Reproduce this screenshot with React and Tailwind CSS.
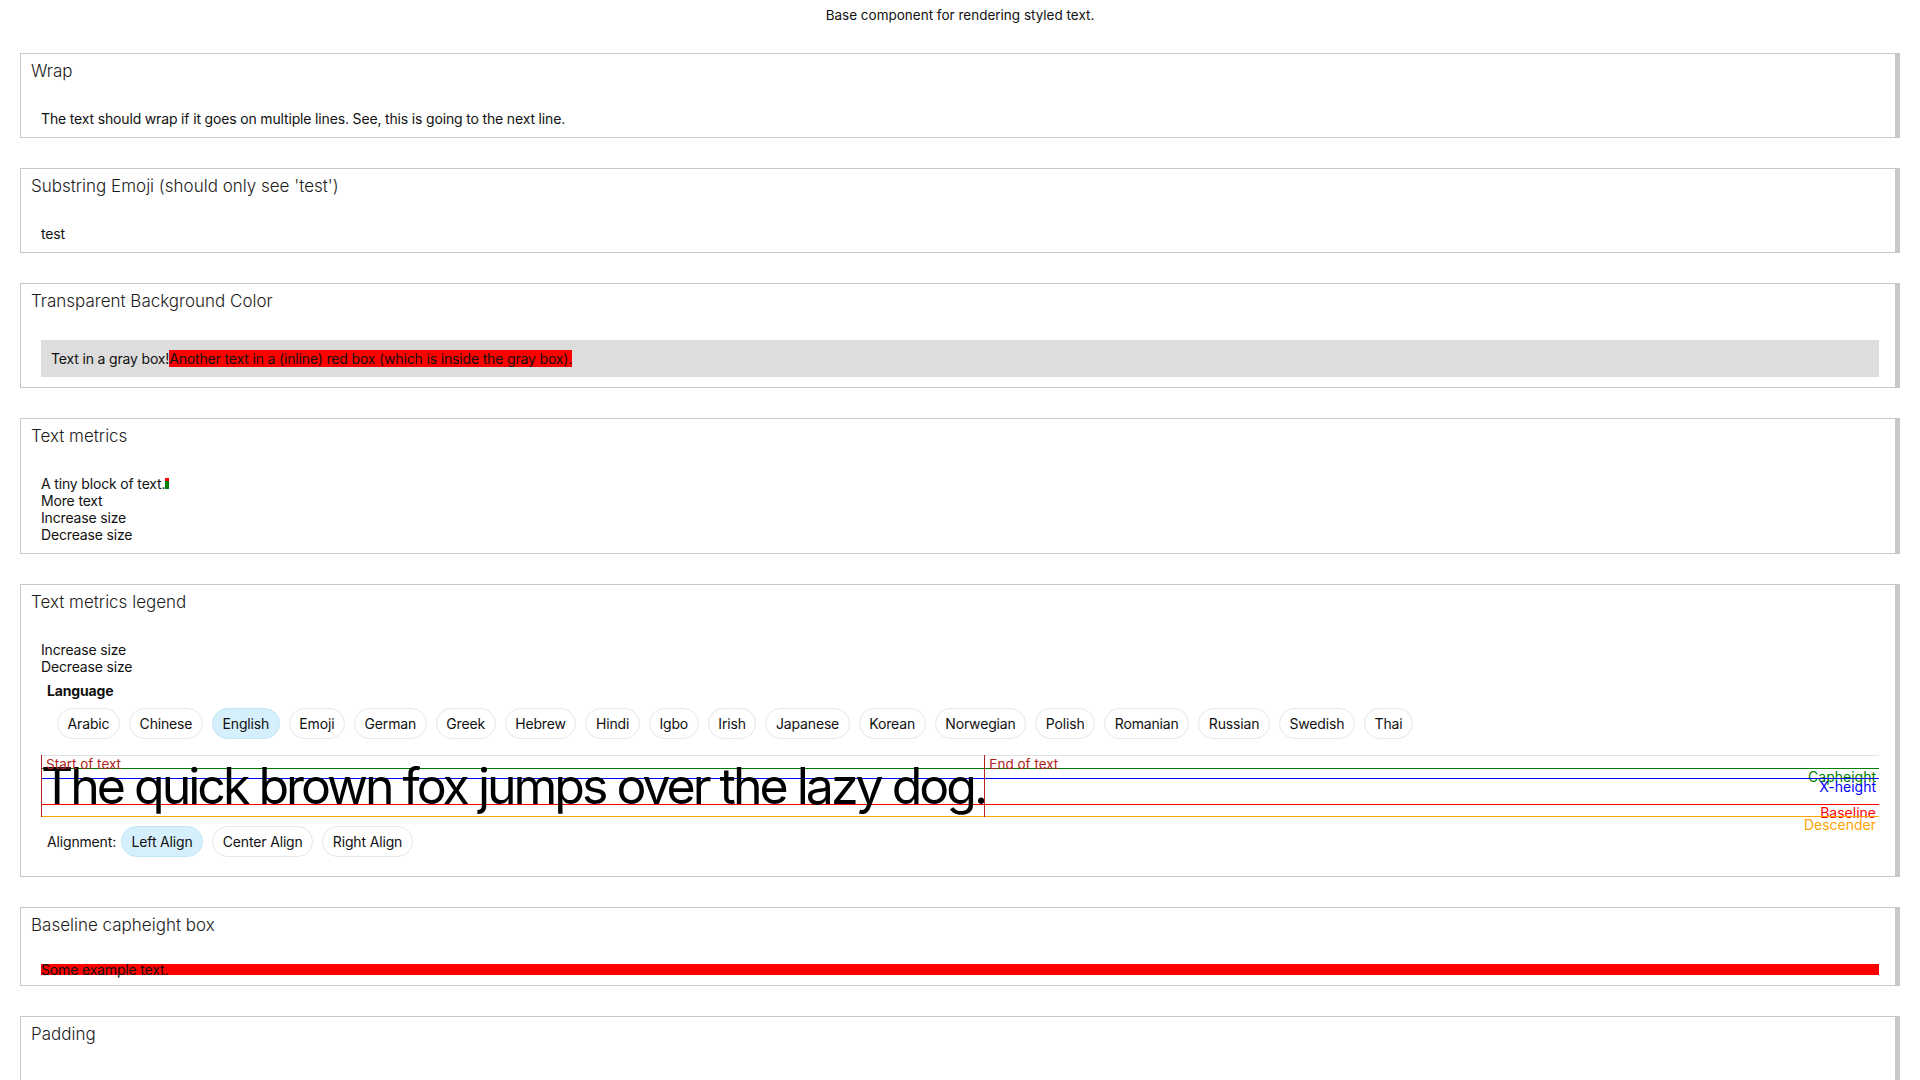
import React, { useState } from "react";

const LANGUAGES = [
  "Arabic", "Chinese", "English", "Emoji", "German", "Greek", "Hebrew", "Hindi", "Igbo",
  "Irish", "Japanese", "Korean", "Norwegian", "Polish", "Romanian", "Russian", "Swedish", "Thai",
];

const ALIGNMENTS = ["Left Align", "Center Align", "Right Align"];

// guide lines drawn over the sample text: offset from the top of the line box
const GUIDES = [
  { label: "Capheight", top: "top-[12px]", color: "bg-[#008000]", text: "text-[#008000]" },
  { label: "X-height", top: "top-[22px]", color: "bg-[#0000ff]", text: "text-[#0000ff]" },
  { label: "Baseline", top: "top-[48px]", color: "bg-[#ff0000]", text: "text-[#ff0000]" },
  { label: "Descender", top: "top-[60px]", color: "bg-[#ffa500]", text: "text-[#ffa500]" },
];

// One example block: title row, then the content with its own padding
const Card = ({ title, children }) => (
  <div className="mb-[30px] border border-[#c8c8c8] shadow-[inset_-4px_0_0_#c8c8c8] px-[10px]">
    <div className="h-[46px] pt-[6px] text-[17px] font-light leading-[22px] text-[#1c1c1c]">{title}</div>
    <div className="p-[10px] text-[14px] leading-[17px] tracking-[-0.16px] text-[#111]">{children}</div>
  </div>
);

const Pill = ({ label, active, onClick }) => (
  <button
    type="button"
    onClick={onClick}
    className={`h-[31px] px-[9.6px] rounded-full border text-[14px] leading-[17px] text-[#111] ${
      active ? "bg-[#d5f0fc] border-[#bfe5f6]" : "bg-white border-[#e6e6e6]"
    }`}
  >
    {label}
  </button>
);

const App = () => {
  const [language, setLanguage] = useState("English");
  const [alignment, setAlignment] = useState("Left Align");

  return (
    <div className="min-h-screen bg-white font-['Inter',sans-serif] text-[#111]">
      <div className="h-[23px] pt-[7px] text-center text-[13.5px] leading-[16px]">
        Base component for rendering styled text.
      </div>

      <div className="px-[20px] pt-[30px]">
        <Card title="Wrap">
          <div>The text should wrap if it goes on multiple lines. See, this is going to the next line.</div>
        </Card>

        <Card title="Substring Emoji (should only see 'test')">
          <div>test</div>
        </Card>

        <Card title="Transparent Background Color">
          <div className="bg-[#dddddd] p-[10px]">
            Text in a gray box!
            <span className="bg-[#ff0000]">Another text in a (inline) red box (which is inside the gray box).</span>
          </div>
        </Card>

        <Card title="Text metrics">
          <div>
            A tiny block of text.
            <span className="inline-block w-[4px] align-baseline">
              <span className="block h-[3px] bg-[#ff0000]" />
              <span className="block h-[8px] bg-[#008000]" />
            </span>
          </div>
          <div>More text</div>
          <div>Increase size</div>
          <div>Decrease size</div>
        </Card>

        <Card title="Text metrics legend">
          <div>Increase size</div>
          <div>Decrease size</div>

          <div className="pt-[7px] pl-[6px]">
            <div className="font-bold">Language</div>
            <div className="mt-[9px] pl-[10px] flex flex-wrap gap-[9px]">
              {LANGUAGES.map((lang) => (
                <Pill key={lang} label={lang} active={lang === language} onClick={() => setLanguage(lang)} />
              ))}
            </div>
          </div>

          {/* metrics drawing */}
          <div className="mt-[16px] border-t border-[#e2e2e2]">
            <div className="relative h-[61px]">
              {GUIDES.map((g) => (
                <div key={g.label} className={`absolute left-0 right-0 ${g.top} h-px ${g.color}`}>
                  <div className={`absolute right-[3px] top-0 text-[14px] leading-[17px] tracking-normal ${g.text}`}>
                    {g.label}
                  </div>
                </div>
              ))}

              <div className="relative inline-block text-[50px] leading-[61px] tracking-[-3px] text-black whitespace-nowrap">
                <div className="absolute left-0 top-[-1px] bottom-0 w-px bg-[#b22222]" />
                <div className="absolute right-0 top-[-1px] bottom-0 w-px bg-[#b22222]" />
                <div className="absolute left-[5px] top-0 text-[13.5px] leading-[17px] tracking-normal text-[#b22222]">
                  Start of text
                </div>
                <div className="absolute left-full ml-[4px] top-0 text-[13.5px] leading-[17px] tracking-normal text-[#b22222] whitespace-nowrap">
                  End of text
                </div>
                The quick brown fox jumps over the lazy dog.
              </div>
            </div>
          </div>

          <div className="mt-[9px] mb-[9px] pl-[6px] flex items-center gap-[9px]">
            <span className="mr-[-4px]">Alignment:</span>
            {ALIGNMENTS.map((a) => (
              <Pill key={a} label={a} active={a === alignment} onClick={() => setAlignment(a)} />
            ))}
          </div>
        </Card>

        <Card title="Baseline capheight box">
          <div className="flow-root h-[11px] bg-[#ff0000]">
            <div className="-mt-[3px] leading-[17px]">Some example text.</div>
          </div>
        </Card>

        <Card title="Padding">
          <div className="p-[20px]">
            <div>Text with padding around it.</div>
          </div>
        </Card>
      </div>
    </div>
  );
};

export default App;
